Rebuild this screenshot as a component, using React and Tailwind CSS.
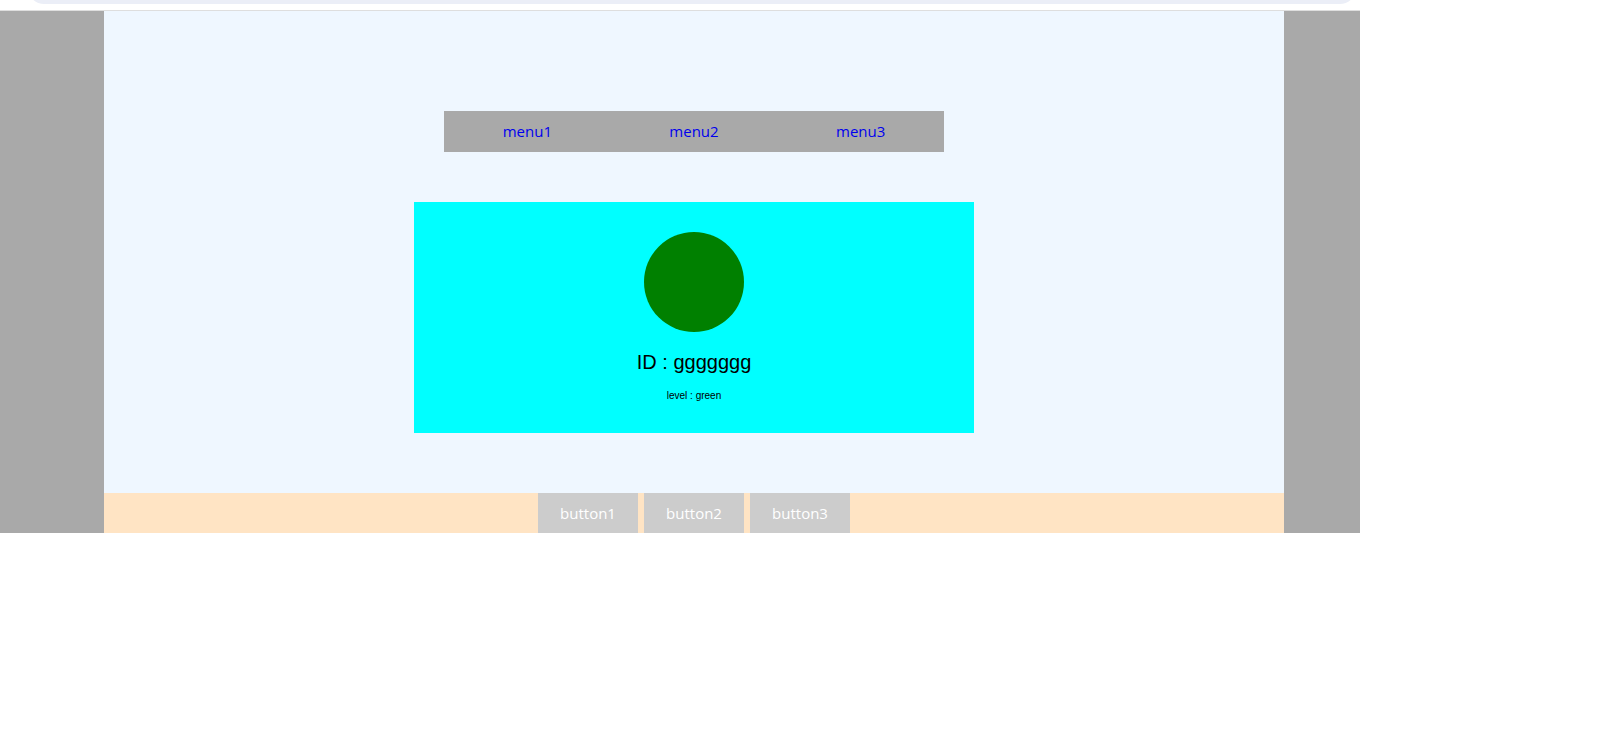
const menus = ["menu1", "menu2", "menu3"];
const buttons = ["button1", "button2", "button3"];

function AddressBar() {
  return (
    <header className="h-[11px] overflow-hidden border-b border-[#dedede] bg-white pr-1 pl-7">
      <div className="-mt-7 h-8 rounded-full bg-[#ebeef7]" />
    </header>
  );
}

function Menu() {
  return (
    <nav className="w-full max-w-[500px] bg-[#a9a9a9] font-['Open_Sans',sans-serif] text-[15px] text-[#0000ee]">
      <ul className="grid h-[41px] grid-cols-3 items-center text-center">
        {menus.map((name) => (
          <li key={name}>
            <a href="#">{name}</a>
          </li>
        ))}
      </ul>
    </nav>
  );
}

function Profile() {
  return (
    <section className="flex w-full max-w-[560px] flex-col items-center bg-[#00ffff] pt-[30px] pb-[31px] font-['Liberation_Sans',sans-serif] text-black">
      <div className="size-[100px] rounded-full bg-[#008000]" />
      <h1 className="mt-[18px] text-xl leading-6">ID : ggggggg</h1>
      <p className="mt-[15px] text-[10px] leading-[13px]">level : green</p>
    </section>
  );
}

export default function App() {
  return (
    <div className="min-h-screen bg-white pr-[258px]">
      <AddressBar />
      <div className="bg-[#a9a9a9] pr-[76px] pl-[104px]">
        <main className="flex flex-col items-center gap-[50px] bg-[#eff7ff] pt-[100px] pb-[60px]">
          <Menu />
          <Profile />
        </main>
        <footer className="flex justify-center gap-1.5 bg-[#ffe4c4] font-['Open_Sans',sans-serif]">
          {buttons.map((name) => (
            <button key={name} type="button" className="h-10 w-[100px] bg-[#cccccc] text-[15px] text-white">
              {name}
            </button>
          ))}
        </footer>
      </div>
    </div>
  );
}
